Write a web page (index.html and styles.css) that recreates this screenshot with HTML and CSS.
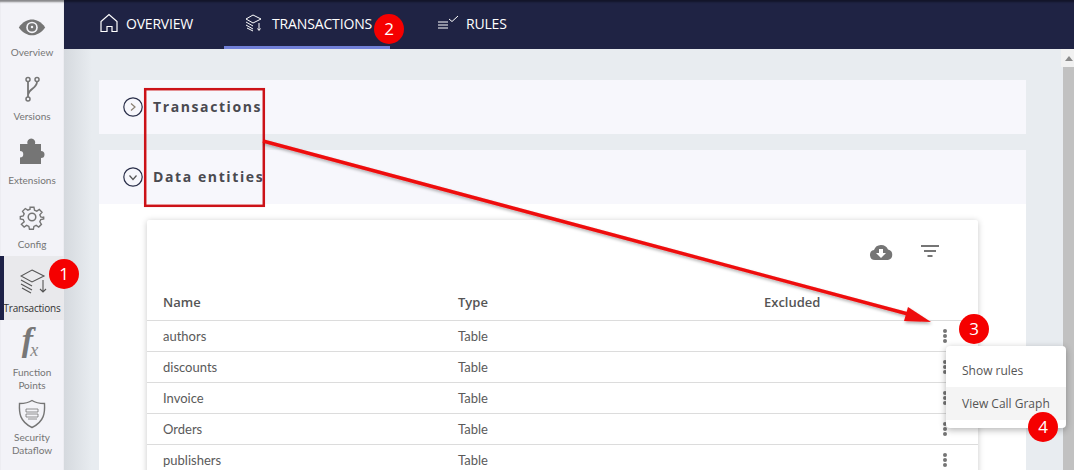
FILE: index.html
```html
<!DOCTYPE html>
<html lang="en">
<head>
<meta charset="utf-8">
<title>Transactions</title>
<link rel="stylesheet" href="styles.css">
</head>
<body>
<div class="app">
  <nav class="side">
    <a class="side-item"><svg class="si" width="28" height="22" viewBox="0 0 34 24"><path d="M1 12.500C6 5.500 12 3 17 3s11 2.500 16 9.500C28 19.500 22 22 17 22S6 19.500 1 12.500Z" fill="#757575"/><circle cx="17" cy="12.500" r="7" fill="#f3f3f8"/><circle cx="17" cy="12.500" r="5" fill="#757575"/><circle cx="17" cy="12" r="1.500" fill="#f3f3f8"/></svg><span>Overview</span></a>
    <a class="side-item"><svg class="si" width="24" height="26" viewBox="0 0 24 26" fill="none" stroke="#757575" stroke-width="1.500"><circle cx="8" cy="3.500" r="2"/><circle cx="17" cy="3.500" r="2"/><circle cx="8" cy="23" r="2"/><path d="M8 5.500v15.500M17 5.500c0 7-8 7-9 13" stroke-width="1.800"/></svg><span>Versions</span></a>
    <a class="side-item"><svg class="si" width="30" height="28" viewBox="0 0 30 28"><path d="M3 6h7.500a4 4 0 1 1 7.500 0h6v7a3.500 3.500 0 1 1 0 7v6H3v-6.500a3.200 3.200 0 1 0 0-6.500Z" fill="#757575"/></svg><span>Extensions</span></a>
    <a class="side-item"><svg class="si" width="26" height="26" viewBox="0 0 24 24" fill="none" stroke="#757575" stroke-width="1.400"><circle cx="12" cy="12" r="3.500"/><path d="M10 2h4l.6 3 2.300 1 2.600-1.700 2.800 2.800L20 9.700l1 2.300 3 .6v-1 2.400l-3 .6-1 2.300 1.700 2.600-2.800 2.800-2.600-1.700-2.300 1-.6 3h-4l-.6-3-2.300-1-2.600 1.700-2.800-2.800L4 16.900 3 14.600 0 14v-2.400l3-.6 1-2.300-1.700-2.600 2.800-2.800L7.700 5 10 4Z" transform="translate(1.200 1.200) scale(.9)"/></svg><span>Config</span></a>
    <a class="side-item active"><svg class="si" width="28" height="28" viewBox="0 0 28 28" fill="none" stroke="#555" stroke-width="1.100"><path d="M12 2 24 8l-12 6L1 8Z"/><path d="M1 12l11 6M1 16l11 6M2 20l9 5M23 12v12M20 21l3 3 3-3"/></svg><span class="strong">Transactions</span></a>
    <a class="side-item fx"><span class="fx-glyph"><i>f</i><em>x</em></span><span>Function<br>Points</span></a>
    <a class="side-item sec"><svg class="si" width="30" height="30" viewBox="0 0 30 30" fill="none" stroke="#757575" stroke-width="1.100"><path d="M15 1.500c3 2 7 3 12.500 3 .5 9 0 18-12.500 24C2.500 22.500 2 13.500 2.500 4.500 8 4.500 12 3.500 15 1.500Z" stroke-width="1.400"/><path d="M9 10h12v3H9zM9 15h12v3H9zM11 20h9" stroke-width=".8"/></svg><span>Security<br>Dataflow</span></a>
  </nav>
  <div class="main">
    <header class="top">
      <a class="tab"><svg width="18" height="20" viewBox="0 0 18 20" fill="none" stroke="#fff" stroke-width="1.200"><path d="M1 18.500V8.500L9 1.500l8 7v10H12v-5H7v5Z"/></svg>OVERVIEW</a>
      <a class="tab on"><svg width="18" height="18" viewBox="0 0 18 18" fill="none" stroke="#fff" stroke-width="1"><path d="M8 1l8 4-8 4-7-4ZM1 8l7 4M1 11l7 4M2 14l6 3M14 9v7M12.500 14.500l1.500 2 1.500-2"/></svg><span>TRANSACTIONS</span></a>
      <a class="tab"><svg width="22" height="16" viewBox="0 0 22 16" fill="none" stroke="#fff" stroke-width="1"><path d="M1 7h10M1 10h10M1 13h10M12 4l3 2.500L21 1"/></svg>RULES</a>
    </header>
    <div class="content">
      <main class="page">
        <section class="panel"><div class="panel-head"><span class="chev"><svg width="20" height="20" viewBox="0 0 20 20" fill="none" stroke="#2a2f4a" stroke-width="1.200"><circle cx="10" cy="10" r="9.200"/><path d="M8 6.500l4 3.500-4 3.500" stroke="#8a7f70"/></svg></span><h2>Transactions</h2></div></section>
        <section class="panel open">
          <div class="panel-head"><span class="chev"><svg width="20" height="20" viewBox="0 0 20 20" fill="none" stroke="#2a2f4a" stroke-width="1.200"><circle cx="10" cy="10" r="9.200"/><path d="M6.500 8.500l3.500 4 3.500-4" stroke="#555"/></svg></span><h2>Data entities</h2></div>
          <div class="panel-body">
            <div class="card">
              <div class="tools">
                <svg width="24" height="18" viewBox="0 0 24 18"><path d="M6 17a5 5 0 0 1-1-9.900A7.500 7.500 0 0 1 19 6.600 5.300 5.300 0 0 1 19 17Z" fill="#757575"/><path d="M10 6h4v4h3l-5 5-5-5h3Z" fill="#fff"/></svg>
                <svg width="18" height="14" viewBox="0 0 18 14" fill="#757575"><rect width="18" height="2" y="0"/><rect x="3" width="12" height="2" y="5"/><rect x="6.500" width="5" height="2" y="10"/></svg>
              </div>
              <div class="row head"><span>Name</span><span>Type</span><span>Excluded</span><span></span></div>
              <div class="row"><span>authors</span><span>Table</span><span></span><span class="dots"><b></b><b></b><b></b></span></div>
              <div class="row"><span>discounts</span><span>Table</span><span></span><span class="dots"><b></b><b></b><b></b></span></div>
              <div class="row"><span>Invoice</span><span>Table</span><span></span><span class="dots"><b></b><b></b><b></b></span></div>
              <div class="row"><span>Orders</span><span>Table</span><span></span><span class="dots"><b></b><b></b><b></b></span></div>
              <div class="row"><span>publishers</span><span>Table</span><span></span><span class="dots"><b></b><b></b><b></b></span></div>
            </div>
          </div>
        </section>
      </main>
      <div class="scrollbar"><div class="sb-up"><svg width="8" height="5" viewBox="0 0 8 5"><path d="M4 0l4 5H0Z" fill="#8a8a8a"/></svg></div><div class="sb-thumb"></div></div>
    </div>
  </div>
</div>

<div class="menu"><div class="menu-item">Show rules</div><div class="menu-item hover">View Call Graph</div></div>

<svg class="marks" width="1074" height="470" viewBox="0 0 1074 470">
  <defs><filter id="sh" x="-5%" y="-20%" width="110%" height="140%"><feDropShadow dx="1" dy="2" stdDeviation="1.500" flood-color="#000" flood-opacity=".3"/></filter></defs>
  <rect x="145.200" y="89.200" width="118.600" height="116.600" fill="none" stroke="#cc1218" stroke-width="2.500"/>
  <g filter="url(#sh)">
    <path d="M263 141 L908 314" stroke="#ee0b0b" stroke-width="3.500"/>
    <path d="M931 322 L908 307 L904 321 Z" fill="#ee0b0b"/>
  </g>
</svg>
<span class="badge b1">1</span>
<span class="badge b2">2</span>
<span class="badge b3">3</span>
<span class="badge b4">4</span>
</body>
</html>
```
FILE: styles.css
```css
* { box-sizing: border-box; }
html, body { margin: 0; height: 470px; overflow: hidden; }
body { font-family: "Open Sans", "Liberation Sans", sans-serif; position: relative; background: #e8ecf0; }
.app { display: flex; height: 470px; }
.side { width: 64px; flex: none; background: #f3f3f8; display: flex; flex-direction: column; box-shadow: inset 0 3px 2px -1px rgba(0,0,0,.45); }
.side-item { height: 64px; flex: none; display: flex; flex-direction: column; align-items: center; justify-content: flex-end; color: #757575; font-size: 10px; line-height: 13px; text-align: center; padding-bottom: 5px; font-family: "Lato", "Open Sans", sans-serif; }
.si { flex: none; margin-bottom: 8px; }
.side-item.active { background: #e9e9ec; border-left: 4px solid #1d2147; color: #333; }
.side-item.active span { margin-left: -4px; }
.side-item.active .si { margin-bottom: 6px; }
.strong { font-family: "Open Sans", sans-serif; font-size: 10px; white-space: nowrap; letter-spacing: -.2px; }
.fx { height: 72px; padding-bottom: 0; }
.sec { height: 72px; padding-bottom: 7px; }
.sec .si { margin-bottom: 2px; }
.fx-glyph { font-family: "Liberation Serif", serif; color: #777; font-size: 34px; line-height: 36px; margin-bottom: 3px; font-weight: bold; margin-left: -4px; }
.fx-glyph em { font-size: 18px; font-weight: normal; color: #888; position: relative; top: 5px; margin-left: -3px; }
.main { flex: 1; min-width: 0; display: flex; flex-direction: column; }
.top { height: 49px; flex: none; background: #1f2344; display: flex; align-items: stretch; padding-left: 34px; box-shadow: inset 0 3px 2px -1px rgba(0,0,0,.4); }
.tab { display: flex; align-items: center; gap: 8px; color: #fff; font-size: 14px; height: 49px; padding: 0 0 3px 2px; letter-spacing: -.2px; white-space: nowrap; }
.tab.on { margin: 0 0 0 31px; padding: 0 0 0 21px; width: 166px; gap: 9px; border-bottom: 3px solid #7180d8; letter-spacing: -.15px; }
.tab.on + .tab { gap: 7px; margin-left: 45px; }
.content { flex: 1; display: flex; min-height: 0; background: linear-gradient(90deg, #d5d9de 0, #e8ecf0 28px); }
.page { flex: 1; padding: 31px 35px 0 35px; min-width: 0; overflow: hidden; }
.panel { background: #f7f7fc; margin-bottom: 16px; }
.panel-head { height: 54px; display: flex; align-items: flex-start; padding: 17px 0 0 24px; gap: 10px; }
.chev { width: 20px; height: 20px; flex: none; display: block; }
.chev svg { display: block; }
h2 { margin: 0; color: #4a4a50; font-size: 14px; line-height: 20px; font-weight: 700; letter-spacing: 1.600px; }
.panel-body { background: #fff; padding: 16px 48px 0; height: 400px; }
.card { background: #fff; box-shadow: 0 1px 6px rgba(0,0,0,.22); border-radius: 2px; height: 300px; }
.tools { height: 64px; display: flex; justify-content: flex-end; align-items: center; gap: 28px; padding: 0 39px 0 0; }
.row { display: grid; grid-template-columns: 295px 306px 1fr 48px; padding-left: 16px; height: 31px; align-items: center; border-top: 1px solid #dcdcdc; font-size: 13px; color: #5a5a5a; font-family: "Lato", "Open Sans", sans-serif; }
.row.head { height: 36px; border-top: 0; font-size: 13px; color: #555; font-weight: 600; font-family: "Open Sans", sans-serif; }
.dots { display: flex; flex-direction: column; gap: 1px; align-items: center; width: 4px; margin-left: 13px; }
.dots b { width: 4px; height: 4px; background: #757575; border-radius: 50%; display: block; }
.scrollbar { width: 13px; flex: none; display: flex; flex-direction: column; }
.sb-up { height: 18px; background: #f1f1f1; display: flex; align-items: center; justify-content: center; padding-left: 2px; }
.sb-thumb { flex: 1; background: #c1c1c1; margin-left: 2px; }
.menu { position: absolute; left: 946px; top: 346px; width: 120px; height: 82px; background: #fff; border-radius: 4px; box-shadow: 0 2px 7px rgba(0,0,0,.3); padding: 8px 0; font-size: 12px; color: #555; }
.menu-item { height: 33px; line-height: 33px; padding-left: 16px; white-space: nowrap; }
.menu-item.hover { background: #f4f4f4; }
.marks { position: absolute; left: 0; top: 0; pointer-events: none; }
.badge { position: absolute; width: 30px; height: 30px; border-radius: 50%; background: #f50000; color: #fff; font-size: 17px; line-height: 30px; text-align: center; font-family: "Open Sans", sans-serif; }
.b1 { left: 49px; top: 259px; }
.b2 { left: 374px; top: 14px; }
.b3 { left: 959px; top: 314px; }
.b4 { left: 1028px; top: 412px; }
```
